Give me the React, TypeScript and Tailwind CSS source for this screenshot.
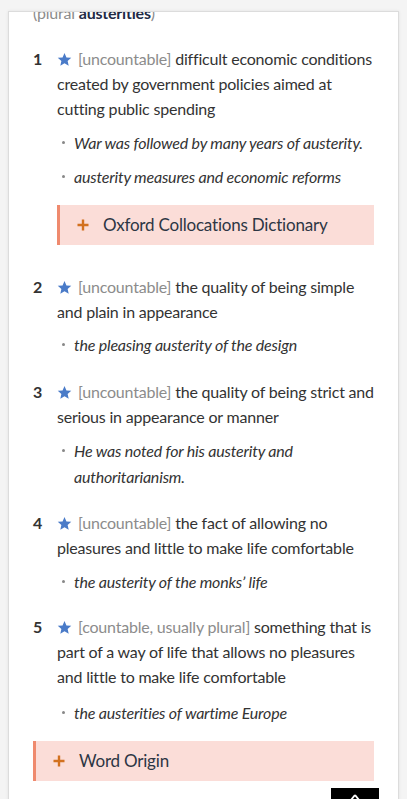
import React from "react";

const Star = () => (
  <svg width="15" height="15" viewBox="0 0 24 24" className="inline-block align-[-2px] mr-[6px]">
    <polygon points="12,1.5 15.1,8.6 22.8,9.3 17,14.4 18.7,22 12,18 5.3,22 7,14.4 1.2,9.3 8.9,8.6" fill="#4a7bc8" />
  </svg>
);

const Plus = () => (
  <svg width="12" height="12" viewBox="0 0 12 12" className="shrink-0">
    <path d="M6 0.5V11.5M0.5 6H11.5" stroke="#d2711f" strokeWidth="2.4" />
  </svg>
);

type Sense = { n: number; label: string; def: string; ex: string[] };

const Ex = ({ text }: { text: string }) => (
  <li className="relative pl-[17px] italic leading-[26px] text-[#333]">
    <span className="absolute left-[5px] top-[11px] w-[3px] h-[3px] rounded-full bg-[#888]" />
    {text}
  </li>
);

const SenseBlock = ({ s, exTop = "mt-[8.5px]", children }: { s: Sense; exTop?: string; children?: React.ReactNode }) => (
  <div className="flex">
    <div className="w-[24px] shrink-0 font-bold leading-[25px] text-[#333]">{s.n}</div>
    <div className="flex-1">
      <div className="leading-[25px] text-[#333]">
        <Star />
        <span className="text-[#8c8c8c]">[{s.label}]</span> {s.def}
      </div>
      <ul className={`${exTop} flex flex-col gap-[8px]`}>
        {s.ex.map((e) => (
          <Ex key={e} text={e} />
        ))}
      </ul>
      {children}
    </div>
  </div>
);

export default function App() {
  const senses: Sense[] = [
    {
      n: 1,
      label: "uncountable",
      def: "difficult economic conditions created by government policies aimed at cutting public spending",
      ex: ["War was followed by many years of austerity.", "austerity measures and economic reforms"],
    },
    { n: 2, label: "uncountable", def: "the quality of being simple and plain in appearance", ex: ["the pleasing austerity of the design"] },
    {
      n: 3,
      label: "uncountable",
      def: "the quality of being strict and serious in appearance or manner",
      ex: ["He was noted for his austerity and authoritarianism."],
    },
    {
      n: 4,
      label: "uncountable",
      def: "the fact of allowing no pleasures and little to make life comfortable",
      ex: ["the austerity of the monks\u2019 life"],
    },
    {
      n: 5,
      label: "countable, usually plural",
      def: "something that is part of a way of life that allows no pleasures and little to make life comfortable",
      ex: ["the austerities of wartime Europe"],
    },
  ];

  return (
    <div className="min-h-screen bg-[#f4f4f4] pt-[11px] overflow-hidden tracking-[-0.2px]" style={{ fontFamily: "Lato, 'Noto Sans', sans-serif" }}>
      <div className="relative ml-[8px] w-[391px] h-[800px] bg-white border border-[#dcdcdc] shadow-[0_0_3px_rgba(0,0,0,0.08)] overflow-hidden text-[16px]">
        <div className="-mt-[12px] px-[24px]">
          <div className="leading-[25px] text-[#8c8c8c]">
            (plural <span className="font-bold text-[#1f2b45]">austerities</span>)
          </div>
          <div className="mt-[21px]">
            <SenseBlock s={senses[0]}>
              <div className="mt-[15.5px] h-[40px] flex items-center gap-[14px] pl-[17px] bg-[#fbddd8] border-l-[3px] border-[#ef8a6e] text-[17px] text-[#2d3644]">
                <Plus />
                <span>Oxford Collocations Dictionary</span>
              </div>
            </SenseBlock>
          </div>
          <div className="mt-[28.5px]">
            <SenseBlock s={senses[1]} />
          </div>
          <div className="mt-[21px]">
            <SenseBlock s={senses[2]} />
          </div>
          <div className="mt-[20.5px]">
            <SenseBlock s={senses[3]} />
          </div>
          <div className="mt-[19.5px]">
            <SenseBlock s={senses[4]} exTop="mt-[10.5px]" />
          </div>
          <div className="mt-[15px] h-[40px] flex items-center gap-[14px] pl-[17px] bg-[#fbddd8] border-l-[3px] border-[#ef8a6e] text-[17px] text-[#2d3644]">
            <Plus />
            <span>Word Origin</span>
          </div>
        </div>
        <div className="absolute left-[322px] top-[776px] w-[48px] h-[40px] bg-black flex justify-center pt-[6px]">
          <svg width="10" height="8" viewBox="0 0 10 8">
            <path d="M5 1L9 6M5 1L1 6" stroke="white" strokeWidth="2" />
          </svg>
        </div>
      </div>
    </div>
  );
}
